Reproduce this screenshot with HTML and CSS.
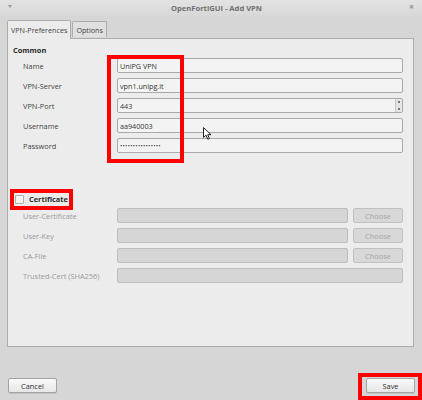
FILE: index.html
```html
<!DOCTYPE html>
<html>
<head>
<meta charset="utf-8">
<link rel="stylesheet" href="styles.css">
</head>
<body>
<div class="window">
  <div class="titlebar">
    <span class="menu-arrow"></span>
    <span class="title">OpenFortiGUI - Add VPN</span>
    <span class="close">&#x2716;</span>
  </div>
  <div class="tabs">
    <div class="tab active">VPN-Preferences</div>
    <div class="tab">Options</div>
  </div>
  <div class="panel">
    <div class="section-title">Common</div>
    <div class="form">
      <div class="row"><span class="label">Name</span><div class="field">UniPG VPN</div></div>
      <div class="row"><span class="label">VPN-Server</span><div class="field">vpn1.unipg.it</div></div>
      <div class="row"><span class="label">VPN-Port</span><div class="field spinfield"><span class="val">443</span><span class="spin"><i></i><i></i></span></div></div>
      <div class="row"><span class="label">Username</span><div class="field">aa940003</div></div>
      <div class="row"><span class="label">Password</span><div class="field"><span class="dots">&bull;&bull;&bull;&bull;&bull;&bull;&bull;&bull;&bull;&bull;&bull;&bull;&bull;&bull;&bull;&bull;</span></div></div>
    </div>
    <div class="cert-head">
      <span class="checkbox"></span>
      <span class="cert-title">Certificate</span>
    </div>
    <div class="form disabled">
      <div class="row"><span class="label">User-Certificate</span><div class="field"></div><div class="choose">Choose</div></div>
      <div class="row"><span class="label">User-Key</span><div class="field"></div><div class="choose">Choose</div></div>
      <div class="row"><span class="label">CA-File</span><div class="field"></div><div class="choose">Choose</div></div>
      <div class="row"><span class="label">Trusted-Cert (SHA256)</span><div class="field"></div></div>
    </div>
  </div>
  <div class="footer">
    <div class="button">Cancel</div>
    <div class="button">Save</div>
  </div>

  <div class="highlight hl-fields"></div>
  <div class="highlight hl-cert"></div>
  <div class="highlight hl-save"></div>

  <svg class="cursor" width="10" height="13" viewBox="0 0 10 13">
    <path d="M0.5 0.5 L0.5 10.5 L3 8.2 L4.8 12.3 L6.4 11.6 L4.7 7.7 L8 7.7 Z" fill="#ffffff" stroke="#222222" stroke-width="1" stroke-linejoin="round"/>
  </svg>
</div>
</body>
</html>
```

FILE: styles.css
```css
html, body {
  margin: 0;
  padding: 0;
}
body {
  background: #d6d6d6;
  font-family: "Open Sans", "Noto Sans", sans-serif;
  font-size: 7.4px;
  color: #3a3a3a;
}
.window {
  position: relative;
  width: 422px;
  height: 400px;
  background: #d6d6d6;
  overflow: hidden;
}
.titlebar {
  height: 16px;
  display: flex;
  align-items: center;
  justify-content: space-between;
  padding: 0 8px 0 8px;
  background: linear-gradient(#e2e2e2, #d8d8d8);
}
.menu-arrow {
  width: 0;
  height: 0;
  border-left: 2.5px solid transparent;
  border-right: 2.5px solid transparent;
  border-top: 3px solid #9a9a9a;
  margin-top: -4px;
}
.title {
  font-weight: bold;
  color: #707070;
  font-size: 7.6px;
  margin-left: 12px;
}
.close {
  color: #a0a0a0;
  font-size: 6px;
  margin-top: -2px;
}
.tabs {
  display: flex;
  align-items: flex-end;
  padding-left: 7px;
  height: 22px;
}
.tab {
  height: 15px;
  padding: 0 3px;
  display: flex;
  align-items: center;
  white-space: nowrap;
  border: 1px solid #acacac;
  border-bottom: none;
  border-radius: 2px 2px 0 0;
  background: #e0e0e0;
  color: #444;
  margin-right: 1px;
  margin-bottom: 1px;
  font-size: 7.2px;
}
.tab.active {
  height: 18px;
  background: #ececec;
  margin-bottom: -1px;
  position: relative;
  z-index: 1;
}
.panel {
  margin-left: 7px;
  width: 405px;
  height: 307px;
  border: 1px solid #adadad;
  background: #ececec;
}
.section-title {
  font-weight: bold;
  color: #2a2a2a;
  padding-left: 5px;
  margin-top: 6px;
  height: 10px;
  line-height: 10px;
}
.form {
  display: flex;
  flex-direction: column;
  gap: 5px;
  padding: 0 10px 0 15px;
}
.section-title + .form {
  margin-top: 3px;
}
.row {
  display: flex;
  align-items: center;
  height: 15px;
}
.label {
  width: 94px;
  flex: none;
  color: #444;
  white-space: nowrap;
}
.field {
  flex: 1;
  height: 15px;
  box-sizing: border-box;
  border: 1px solid #a9a9a9;
  border-radius: 2px;
  background: #f3f3f3;
  display: flex;
  align-items: center;
  padding-left: 2px;
  color: #333;
  font-size: 7.2px;
}
.spinfield {
  justify-content: space-between;
}
.spin {
  width: 6px;
  height: 13px;
  border-left: 1px solid #c4c4c4;
  background: #e4e4e4;
  display: flex;
  flex-direction: column;
  justify-content: space-around;
  align-items: center;
}
.spin i {
  display: block;
  width: 2px;
  height: 2px;
  background: #777;
}
.dots {
  font-size: 6px;
  letter-spacing: 0.3px;
  color: #333;
  line-height: 1;
}
.cert-head {
  display: flex;
  align-items: center;
  height: 12px;
  margin-top: 40px;
  padding-left: 7px;
  margin-bottom: 3px;
}
.checkbox {
  width: 7px;
  height: 7px;
  border: 1px solid #b0b0b0;
  background: #f4f4f4;
  border-radius: 1px;
  margin-right: 5px;
}
.cert-title {
  font-weight: bold;
  color: #2a2a2a;
}
.disabled .label {
  color: #9a9a9a;
}
.disabled .field {
  background: #d6d6d6;
  border-color: #bdbdbd;
}
.choose {
  width: 50px;
  height: 15px;
  box-sizing: border-box;
  margin-left: 5px;
  border: 1px solid #c0c0c0;
  border-radius: 2px;
  background: #d8d8d8;
  color: #a6a6a6;
  display: flex;
  align-items: center;
  justify-content: center;
}
.footer {
  display: flex;
  justify-content: space-between;
  padding: 0 7px 0 8px;
  margin-top: 31px;
}
.button {
  width: 49px;
  height: 15px;
  box-sizing: border-box;
  border: 1px solid #a3a3a3;
  border-radius: 2px;
  background: linear-gradient(#fafafa, #e6e6e6);
  display: flex;
  align-items: center;
  justify-content: center;
  color: #333;
  box-shadow: 0 1px 0 rgba(0,0,0,0.08);
}
.highlight {
  position: absolute;
  border: 4px solid #ff0000;
  box-sizing: border-box;
}
.hl-fields {
  left: 107px;
  top: 55px;
  width: 77px;
  height: 108px;
}
.hl-cert {
  left: 10px;
  top: 189px;
  width: 63px;
  height: 21px;
}
.hl-save {
  left: 358px;
  top: 373px;
  width: 64px;
  height: 27px;
}
.cursor {
  position: absolute;
  left: 203px;
  top: 127px;
}
```
